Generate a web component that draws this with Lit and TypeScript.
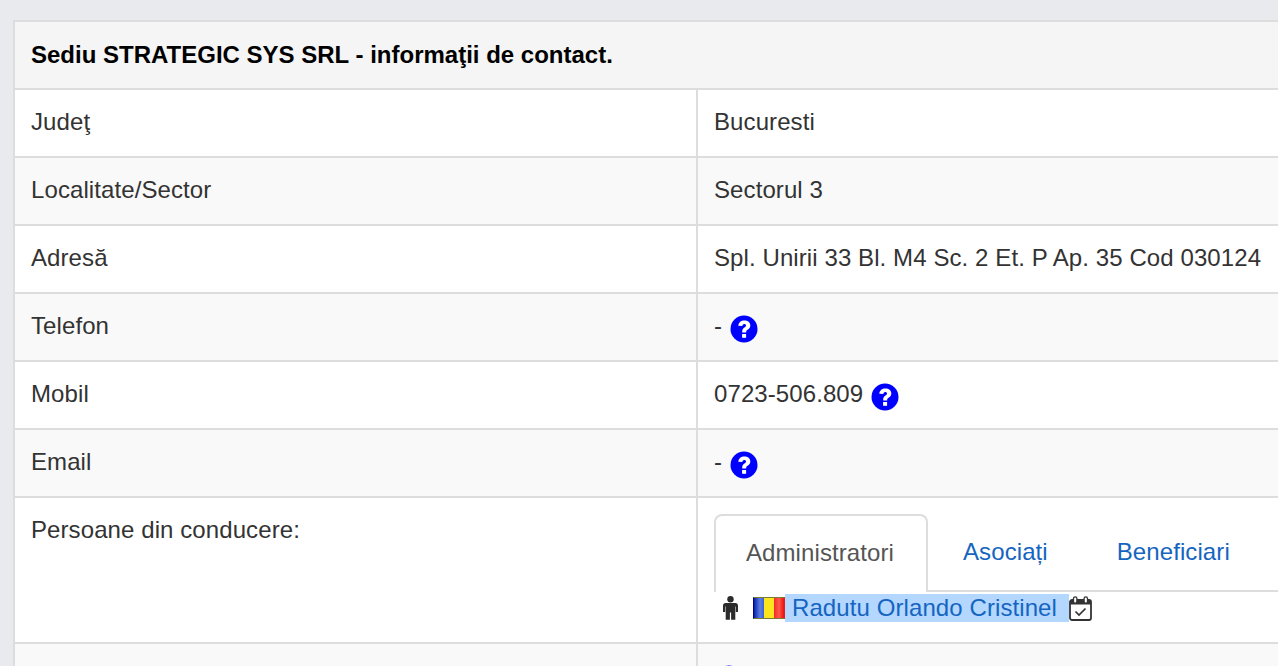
import { LitElement, html, css, svg } from "lit";
import { customElement } from "lit/decorators.js";

const help = html`<svg class="help" viewBox="0 0 28 28" aria-hidden="true">
  <circle cx="14" cy="14" r="13.500" fill="#0000ff"></circle>
  <path d="M8.300 10.800C8.600 7.400 11 5.500 14.400 5.500c3.400 0 5.900 2 5.900 4.900 0 2.100-1.100 3.200-2.700 4.300-1.100.7-1.400 1.100-1.400 2.300v.5h-4v-1c0-2 .7-3 2.300-4 1-.7 1.500-1.200 1.500-2 0-.9-.7-1.500-1.700-1.500-1.100 0-1.900.7-2 2z" fill="#fff"></path>
  <rect x="12.100" y="19" width="4" height="3.800" fill="#fff"></rect>
</svg>`;

const person = svg`<svg class="person" viewBox="0 0 15 24" aria-hidden="true">
  <circle cx="7.500" cy="3.200" r="3.200" fill="#2b2b2b"></circle>
  <path d="M2.500 7h10c1.400 0 2.500 1.100 2.500 2.500V16h-2.200v-5.500h-.5V23.800H8.100V16.500H6.900V23.800H2.700V10.500h-.5V16H0V9.500C0 8.100 1.100 7 2.500 7z" fill="#2b2b2b"></path>
</svg>`;

const calendar = svg`<svg class="cal" viewBox="0 0 23 25" aria-hidden="true">
  <rect x="1" y="4" width="21" height="20" rx="2" fill="#fff" stroke="#333" stroke-width="1.800"></rect>
  <rect x="1" y="4" width="21" height="4.500" fill="#333"></rect>
  <rect x="4.500" y="0.800" width="3.400" height="6.400" rx="1.700" fill="#fff" stroke="#333" stroke-width="1.300"></rect>
  <rect x="15.100" y="0.800" width="3.400" height="6.400" rx="1.700" fill="#fff" stroke="#333" stroke-width="1.300"></rect>
  <path d="M6.500 15.500l3.500 3.500 6.500-6.500" fill="none" stroke="#333" stroke-width="1.700"></path>
</svg>`;

const rows: [string, unknown][] = [
  ["Judeţ", "Bucuresti"],
  ["Localitate/Sector", "Sectorul 3"],
  ["Adresă", "Spl. Unirii 33 Bl. M4 Sc. 2 Et. P Ap. 35 Cod 030124"],
  ["Telefon", html`- ${help}`],
  ["Mobil", html`0723-506.809 ${help}`],
  ["Email", html`- ${help}`],
];

@customElement("app-root")
export class AppRoot extends LitElement {
  static styles = css`
    :host {
      display: block;
      height: 666px;
      overflow: hidden;
      background: #e9eaee;
      box-sizing: border-box;
      padding: 20px 0 0 13px;
      font-family: "Liberation Sans", Arial, sans-serif;
      font-size: 24px;
      color: #333;
    }
    .table {
      width: 1400px;
      border: 2px solid #dddddd;
      border-right: none;
      background: #fff;
    }
    .head {
      height: 66px;
      box-sizing: border-box;
      display: flex;
      align-items: center;
      padding: 0 16px;
      background: #f5f5f5;
      font-weight: 700;
      color: #000;
    }
    .row {
      display: grid;
      grid-template-columns: 681px 1fr;
      border-top: 2px solid #dddddd;
      letter-spacing: 0.09px;
    }
    .row.odd {
      background: #f9f9f9;
    }
    .cell {
      min-height: 66px;
      box-sizing: border-box;
      padding: 16px 16px 0;
      line-height: 32px;
      white-space: nowrap;
    }
    .cell + .cell {
      border-left: 2px solid #dddddd;
    }
    .help {
      width: 28px;
      height: 28px;
      vertical-align: -9px;
      margin-left: 1px;
    }
    .tall .cell {
      height: 144px;
    }
    .tall .cell + .cell {
      padding: 16px 0 0 16px;
    }
    .tabs {
      display: flex;
      height: 78px;
      box-sizing: border-box;
      border-bottom: 2px solid #dddddd;
    }
    .tab {
      box-sizing: border-box;
      height: 78px;
      padding: 22px 0 0;
      color: #1565c0;
    }
    .tab.active {
      width: 214px;
      padding: 21px 0 0 30px;
      color: #555;
      border: 2px solid #dddddd;
      border-bottom: none;
      border-radius: 8px 8px 0 0;
      background: #fff;
    }
    .tab.a2 {
      margin-left: 35px;
    }
    .tab.a3 {
      margin-left: 69px;
    }
    .person-row {
      display: flex;
      align-items: center;
      height: 28px;
      margin-top: 2px;
      padding-left: 9px;
    }
    .person {
      width: 15px;
      height: 24px;
      margin-right: 15px;
    }
    .flag {
      display: flex;
      width: 32px;
      height: 22px;
      box-sizing: border-box;
      border: 1px solid #1a1a9a;
      border-left-color: #00008b;
      border-right-color: #e02020;
      border-top-color: #7a7a30;
      border-bottom-color: #7a7a30;
    }
    .flag i {
      flex: 1;
    }
    .blue {
      background: linear-gradient(90deg, #0a1fa8, #5b7fe0 60%, #3c5fd8);
    }
    .yellow {
      background: #fde51e;
    }
    .red {
      background: linear-gradient(90deg, #f02a2a, #ff5a4a 50%, #ee1010);
    }
    .name {
      background: #b3d7ff;
      color: #1565c0;
      height: 28px;
      line-height: 28px;
      width: 284px;
      padding-left: 7px;
      box-sizing: border-box;
    }
    .cal {
      width: 23px;
      height: 25px;
    }
  `;

  render() {
    return html`<div class="table">
      <div class="head">Sediu STRATEGIC SYS SRL - informaţii de contact.</div>
      ${rows.map(
        ([k, v], i) => html`<div class="row ${i % 2 ? "odd" : ""}">
          <div class="cell">${k}</div>
          <div class="cell">${v}</div>
        </div>`
      )}
      <div class="row tall">
        <div class="cell">Persoane din conducere:</div>
        <div class="cell">
          <div class="tabs">
            <div class="tab active">Administratori</div>
            <div class="tab a2">Asociați</div>
            <div class="tab a3">Beneficiari</div>
          </div>
          <div class="person-row">
            ${person}
            <span class="flag"><i class="blue"></i><i class="yellow"></i><i class="red"></i></span>
            <span class="name">Radutu Orlando Cristinel</span>
            ${calendar}
          </div>
        </div>
      </div>
      <div class="row odd">
        <div class="cell"></div>
        <div class="cell">${help}</div>
      </div>
    </div>`;
  }
}
